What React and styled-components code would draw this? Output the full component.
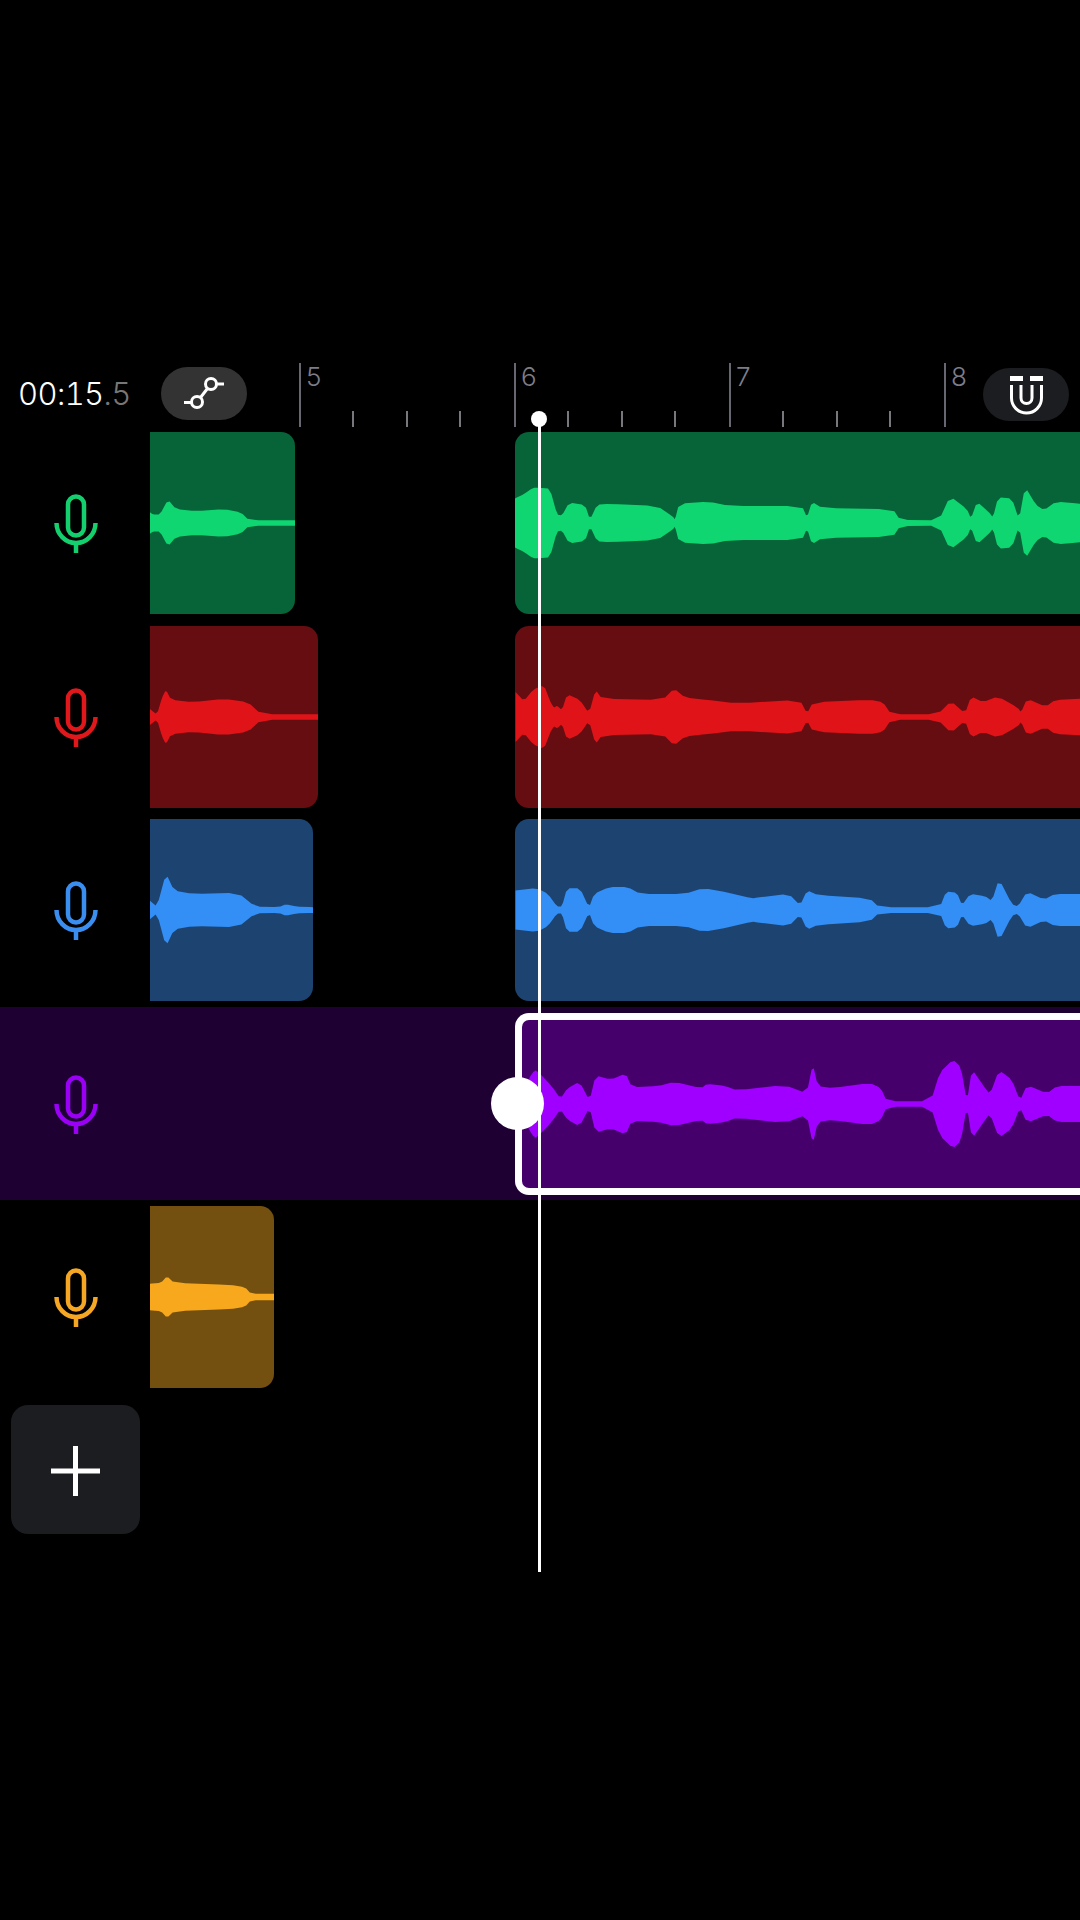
import * as React from "react";
import styled, { createGlobalStyle } from "styled-components";

const GlobalStyle = createGlobalStyle`
  html, body {
    margin: 0;
    background: #000;
  }
  * {
    box-sizing: border-box;
  }
`;

const Page = styled.div`
  position: relative;
  width: 1080px;
  height: 1920px;
  padding-top: 360px;
  overflow: hidden;
  background: #000;
  font-family: Inter, "Liberation Sans", sans-serif;
`;

const Header = styled.div`
  position: relative;
  display: flex;
  align-items: center;
  height: 66px;
`;

const Time = styled.div`
  flex: 0 0 161px;
  padding-left: 18px;
  font-size: 31px;
  font-weight: 300;
  font-variant-numeric: tabular-nums;
  letter-spacing: -0.6px;
  color: #fff;
  white-space: nowrap;
`;

const Dim = styled.span`
  color: #777;
`;

const Pill = styled.div`
  display: flex;
  flex: 0 0 86px;
  align-items: center;
  justify-content: center;
  height: 53px;
  border-radius: 27px;
  background: ${(p) => p.$bg};
`;

const MagnetPill = styled(Pill)`
  position: absolute;
  right: 11px;
  top: 8px;
  width: 86px;
`;

const Ruler = styled.div`
  display: flex;
  align-self: flex-start;
  margin: 3px 0 0 52px;
`;

const Segment = styled.div`
  display: flex;
  flex: 0 0 215px;
  flex-direction: column;
  justify-content: space-between;
  height: 64px;
  border-left: 2px solid #666770;
`;

const SegmentLabel = styled.span`
  padding-left: 5px;
  font-size: 26px;
  font-weight: 300;
  line-height: 28px;
  color: #7d7d88;
`;

const MinorTicks = styled.div`
  display: grid;
  grid-template-columns: repeat(4, 1fr);
  height: 16px;
`;

const MinorTick = styled.i`
  margin-left: -2px;
  border-left: 2px solid #77777c;
  &:first-child {
    border-left: none;
  }
`;

const Row = styled.div`
  display: flex;
  height: 193.5px;
  padding-top: 6px;
  background: ${(p) => p.$bg || "transparent"};
`;

const Head = styled.div`
  display: flex;
  flex: 0 0 150px;
  align-items: center;
  justify-content: center;
  height: 182px;
  padding: 2px 0 0 1px;
`;

const Lane = styled.div`
  display: grid;
  flex: 1;
  grid-template-columns: 365px 1fr;
  height: 182px;
`;

const LeftClip = styled.div`
  width: ${(p) => p.$width}px;
  height: 182px;
  border-radius: 0 14px 14px 0;
  overflow: hidden;
  background: ${(p) => p.$bg};
`;

const RightClip = styled.div`
  position: relative;
  height: 182px;
  border-radius: 14px 0 0 14px;
  background: ${(p) => p.$bg};
  ${(p) =>
    p.$selected &&
    `
    border: 7.5px solid #fff;
    border-right: none;
  `}
`;

const Handle = styled.div`
  position: absolute;
  left: -31.5px;
  top: 50%;
  width: 53px;
  height: 53px;
  margin-top: -26.5px;
  border-radius: 50%;
  background: #fff;
`;

const WaveSvg = styled.svg`
  display: block;
  width: 100%;
  height: 100%;
`;

const AddButton = styled.div`
  display: flex;
  align-items: center;
  justify-content: center;
  width: 129px;
  height: 129px;
  margin: 11px 0 0 11px;
  padding-top: 3px;
  border-radius: 17px;
  background: #1c1d20;
`;

const Playhead = styled.div`
  position: absolute;
  left: 538px;
  top: 419px;
  width: 3px;
  height: 1153px;
  background: #fff;
  &::before {
    content: "";
    position: absolute;
    left: -7px;
    top: -8px;
    width: 16px;
    height: 16px;
    border-radius: 50%;
    background: #fff;
  }
`;

const Mic = ({ color }) => (
  <svg width="44" height="60" viewBox="0 0 44 60" fill="none" stroke={color} strokeWidth="4.5">
    <rect x="14" y="2.5" width="16" height="39" rx="8" />
    <path d="M2.5 29a19.5 20 0 0 0 39 0" />
    <path d="M22 49v10" />
  </svg>
);

// cut each corner of the profile so the lobes read as rounded
const soften = (points) => {
  const out = [points[0]];
  for (let i = 0; i < points.length - 1; i++) {
    const [x0, h0] = points[i];
    const [x1, h1] = points[i + 1];
    out.push([x0 + (x1 - x0) * 0.2, h0 + (h1 - h0) * 0.2]);
    out.push([x0 + (x1 - x0) * 0.8, h0 + (h1 - h0) * 0.8]);
  }
  out.push(points[points.length - 1]);
  return out;
};

const Wave = ({ color, from, to, span = 182, gain = 1, points }) => {
  const profile = soften(points);
  const top = profile.map(([x, h]) => `${x},${-h * gain}`);
  const bottom = [...profile].reverse().map(([x, h]) => `${x},${h * gain}`);
  return (
    <WaveSvg viewBox={`${from} ${-span / 2} ${to - from} ${span}`} preserveAspectRatio="none">
      <polygon fill={color} points={[...top, ...bottom].join(" ")} />
    </WaveSvg>
  );
};

const tracks = [
  {
    mic: "#13cf6d",
    bg: "#076338",
    wave: "#0fd671",
    gain: 1.07,
    leftWidth: 145,
    left: [[150, 10], [153, 8], [160, 8], [168, 22], [176, 13], [196, 11], [224, 13], [241, 10], [249, 2.5], [295, 2.5]],
    right: [[515, 23], [524, 27], [533, 33], [540, 33], [550, 32], [557, 8], [562, 7], [569, 19], [585, 17], [590, 3], [597, 17], [609, 18], [657, 16], [673, 6], [675, 3], [679, 18], [709, 20], [729, 16], [802, 16], [807, 5], [812, 20], [822, 14], [893, 13], [900, 3], [939, 2.5], [950, 25], [967, 13], [971, 4], [977, 20], [989, 10], [993, 5], [998, 24], [1012, 23], [1019, 3], [1025, 34], [1036, 17], [1044, 12], [1056, 20], [1080, 18]],
  },
  {
    mic: "#e0181c",
    bg: "#660d12",
    wave: "#e01418",
    gain: 1.14,
    leftWidth: 168,
    left: [[150, 7], [157, 2], [162, 17], [166, 24], [171, 15], [193, 13], [224, 16], [248, 13], [261, 2.5], [318, 2.5]],
    right: [[515.5, 22], [524, 14], [533, 24], [544, 28], [550, 14], [554, 8], [557, 10], [562, 6], [567, 20], [580, 15], [589, 3], [595.5, 24], [602, 16], [663, 15], [674, 25], [685, 17], [707, 15], [737, 12], [800, 15], [807, 3], [813, 13], [870, 15], [883, 13], [891, 2.5], [938, 2.5], [951, 14], [965, 3], [971, 18], [983, 13], [998, 18], [1018, 8], [1021, 4], [1027, 16], [1046, 9], [1055, 15], [1080, 16]],
  },
  {
    mic: "#3a8ef0",
    bg: "#1d4470",
    wave: "#338ff5",
    gain: 1.15,
    leftWidth: 163,
    left: [[150, 8], [157, 3], [166, 32], [174, 17], [193, 14], [238, 15], [255, 3], [279, 2.5], [286, 5], [296, 3], [313, 2.5]],
    right: [[515.5, 17], [537, 19], [548, 14], [557, 3], [562, 3], [567, 19], [580, 19], [589, 2], [594, 14], [609, 20], [628, 20], [640, 14], [685, 14], [703, 19], [729, 15], [752, 10], [759, 11], [789, 14], [800, 4], [807, 17], [818, 13], [870, 10], [879, 2.5], [940, 2.5], [946, 16], [957, 15], [962, 4], [970, 14], [985, 12], [992, 8], [999, 27], [1012, 5], [1018, 3], [1027, 16], [1044, 9], [1055, 14], [1080, 14]],
  },
  {
    mic: "#9a00f5",
    bg: "#46006c",
    wave: "#a000ff",
    gain: 1.05,
    rowBg: "#1f0033",
    selected: true,
    right: [[523, 12], [533, 30], [537, 32], [552, 17], [561, 5], [568, 15], [580, 21], [590, 3], [596, 27], [611, 23], [626, 29], [632, 16], [659, 17], [674, 21], [702, 15], [707, 19], [726, 17], [737, 13], [785, 18], [807, 10], [813, 38], [818, 17], [833, 15], [870, 20], [881, 15], [887, 2.5], [931, 2.5], [940, 30], [953, 42], [961, 35], [967, 2], [972, 33], [983, 18], [990, 9], [999, 32], [1012, 23], [1020, 3], [1027, 18], [1047, 10], [1057, 17], [1080, 17]],
  },
  {
    mic: "#f5a623",
    bg: "#73500f",
    wave: "#f8a81c",
    gain: 1.1,
    leftWidth: 124,
    left: [[150, 12], [161, 13], [167, 19], [174, 13], [230, 11], [245, 9], [251, 3], [274, 3]],
  },
];

const seconds = [5, 6, 7, 8];

export default function App() {
  return (
    <Page>
      <GlobalStyle />
      <Header>
        <Time>
          00:15<Dim>.5</Dim>
        </Time>
        <Pill $bg="#333">
          <svg width="44" height="34" viewBox="0 0 44 34" fill="none" stroke="#fff" strokeWidth="3">
            <circle cx="15" cy="26" r="5.5" />
            <circle cx="29" cy="8" r="5.5" />
            <path d="M2 26.5h7.5M34.5 8H42M18.5 21.5l7-9" />
          </svg>
        </Pill>
        <Ruler>
          {seconds.map((s) => (
            <Segment key={s}>
              <SegmentLabel>{s}</SegmentLabel>
              {s < 8 && (
                <MinorTicks>
                  <MinorTick />
                  <MinorTick />
                  <MinorTick />
                  <MinorTick />
                </MinorTicks>
              )}
            </Segment>
          ))}
        </Ruler>
        <MagnetPill $bg="#1c1d20">
          <svg width="33" height="40" viewBox="0 0 33 40" fill="none" stroke="#fff" strokeWidth="3">
            <path d="M0 3.5h13M20 3.5h13" strokeWidth="5" />
            <path d="M1.5 10v13a15 15 0 0 0 30 0V10" />
            <path d="M11 10v13a5.5 5.5 0 0 0 11 0V10" />
          </svg>
        </MagnetPill>
      </Header>

      {tracks.map((t) => (
        <Row key={t.mic} $bg={t.rowBg}>
          <Head>
            <Mic color={t.mic} />
          </Head>
          <Lane>
            <div>
              {t.left && (
                <LeftClip $width={t.leftWidth} $bg={t.bg}>
                  <Wave color={t.wave} gain={t.gain} from={150} to={150 + t.leftWidth} points={t.left} />
                </LeftClip>
              )}
            </div>
            {t.right && (
              <RightClip $bg={t.bg} $selected={t.selected}>
                <Wave
                  color={t.wave}
                  gain={t.gain}
                  from={t.selected ? 522.5 : 515}
                  to={1080}
                  span={t.selected ? 167 : 182}
                  points={t.right}
                />
                {t.selected && <Handle />}
              </RightClip>
            )}
          </Lane>
        </Row>
      ))}

      <AddButton>
        <svg width="49" height="50" viewBox="0 0 49 50" stroke="#fff" strokeWidth="5">
          <path d="M0 25h49M24.5 0v50" />
        </svg>
      </AddButton>

      <Playhead />
    </Page>
  );
}
